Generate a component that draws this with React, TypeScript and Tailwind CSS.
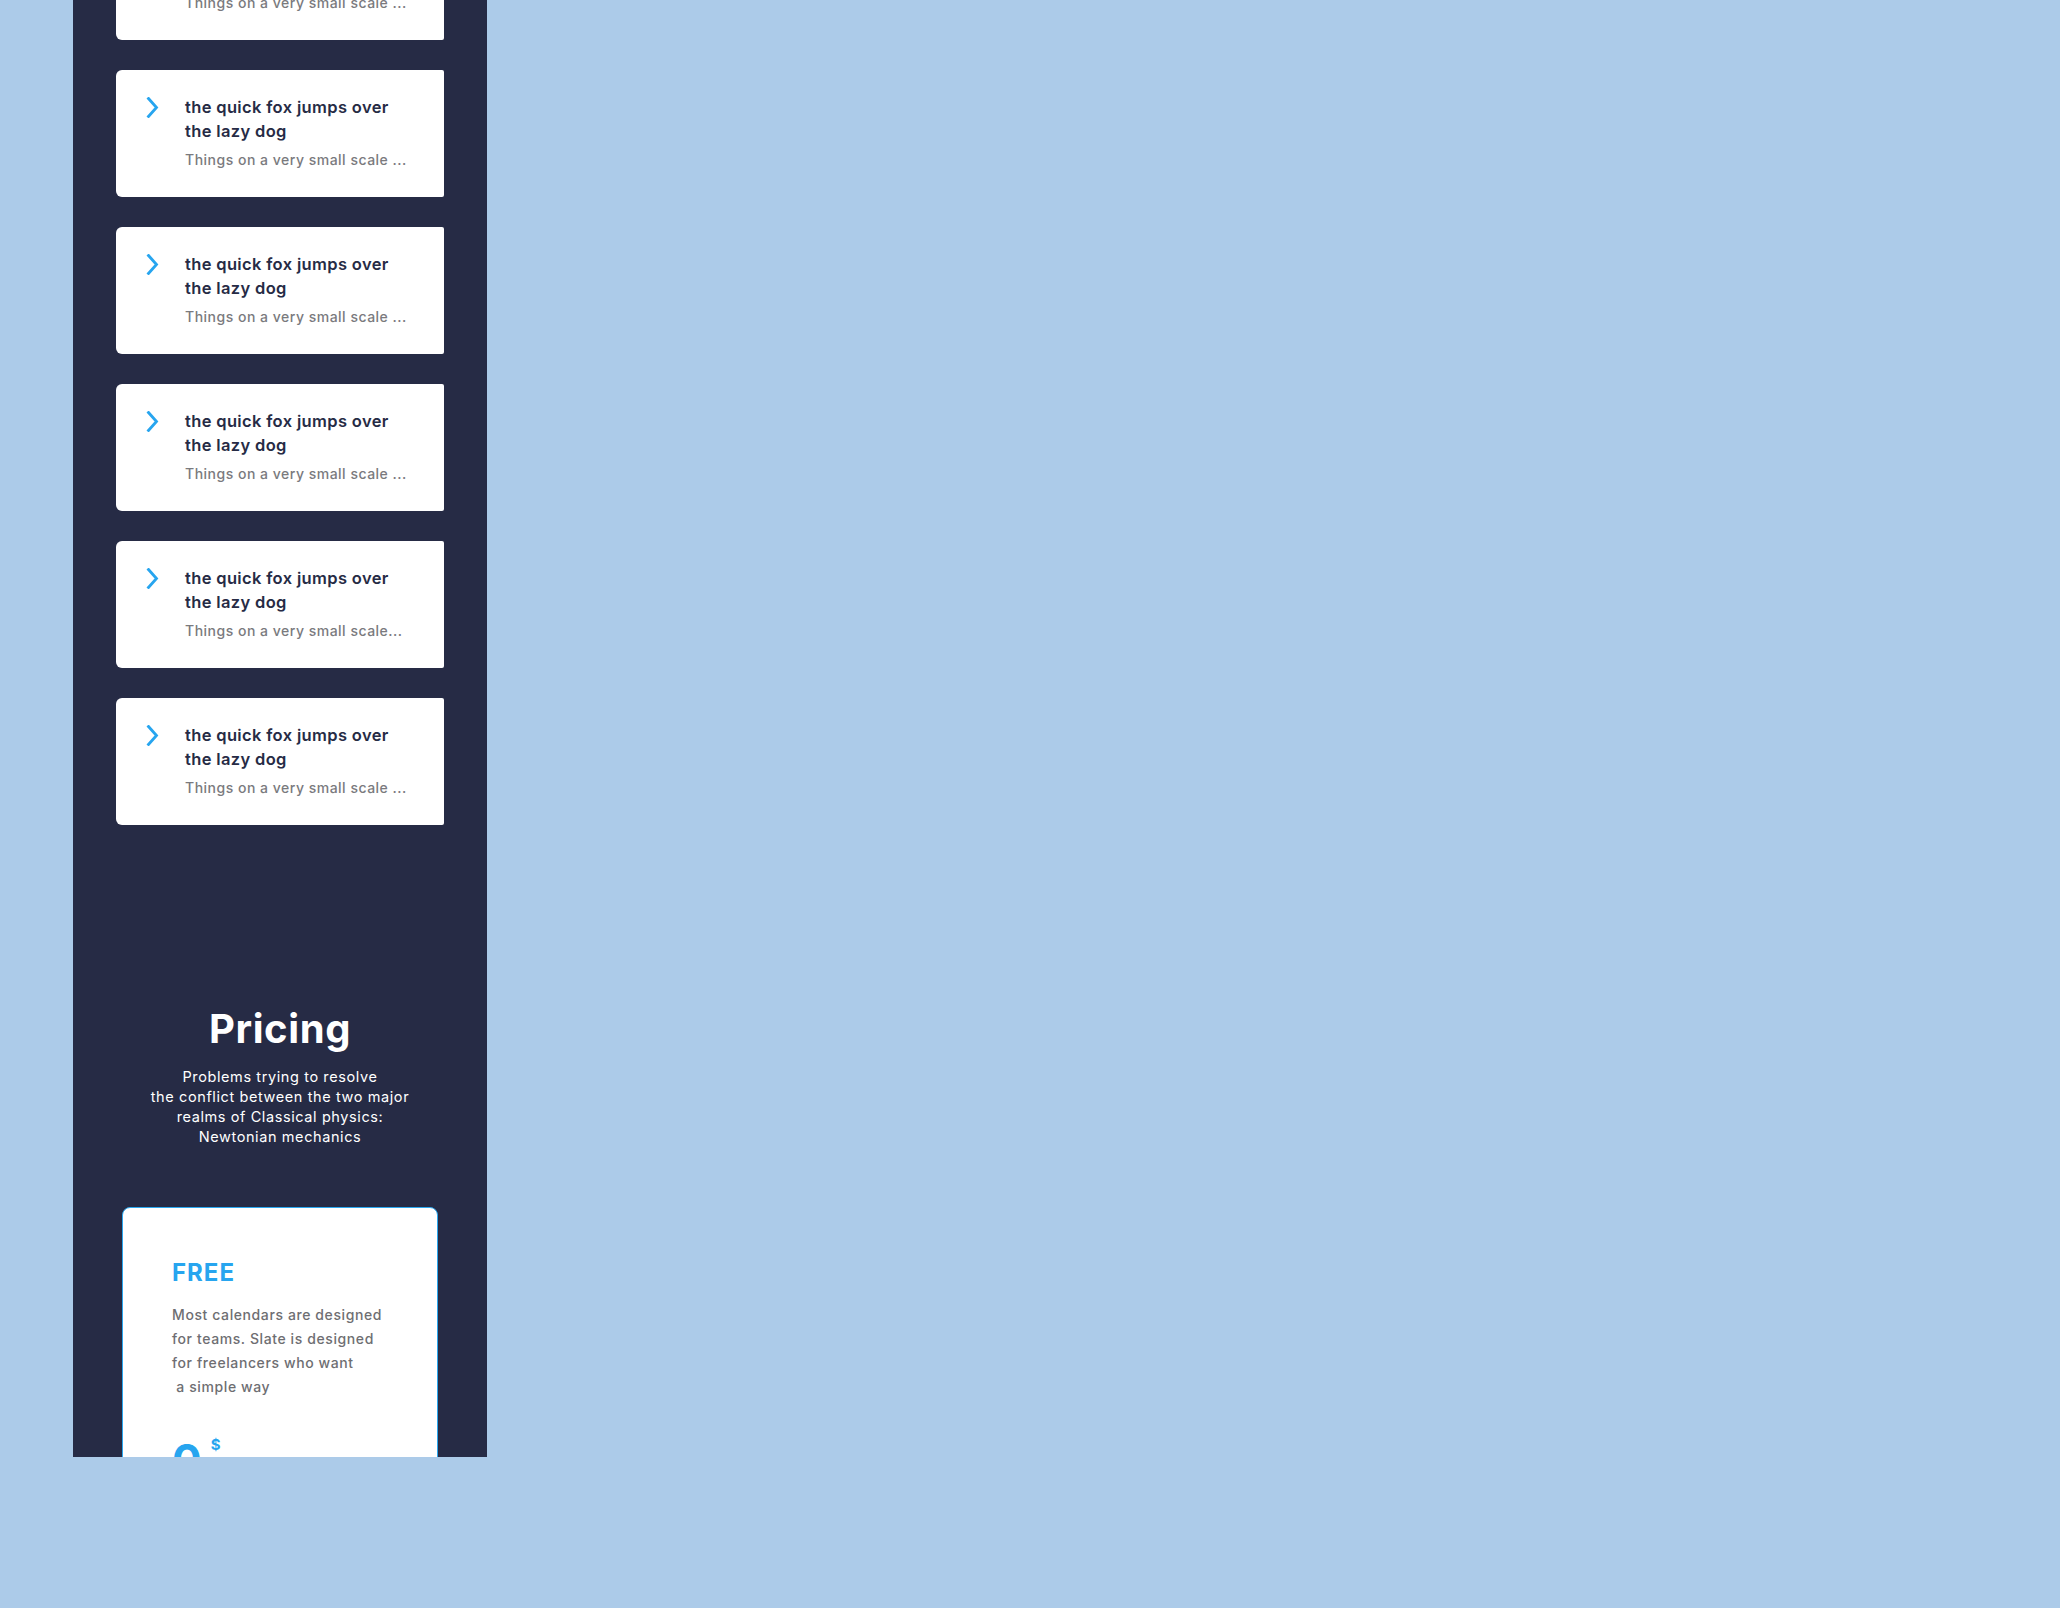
const items = [
  'Things on a very small scale ...',
  'Things on a very small scale ...',
  'Things on a very small scale ...',
  'Things on a very small scale ...',
  'Things on a very small scale...',
  'Things on a very small scale ...',
];

function Chevron() {
  return (
    <svg width="13" height="21" viewBox="0 0 13 21" fill="none" className="shrink-0 mt-[2px]">
      <polyline
        points="2.5,1.5 10.5,10.5 2.5,19.5"
        stroke="#27a5ef"
        strokeWidth="2.8"
        strokeLinecap="square"
        strokeLinejoin="miter"
      />
    </svg>
  );
}

function TopicCard({ text }: { text: string }) {
  return (
    <div className="flex h-[127px] items-start gap-[26px] rounded-l-md rounded-r-[2px] bg-white pl-[30px] pt-[25px]">
      <Chevron />
      <div>
        <h3 className="text-[16.5px] font-semibold leading-6 tracking-[0.35px] text-[#262b45]">
          the quick fox jumps over
          <br />
          the lazy dog
        </h3>
        <p className="mt-[7px] text-[14px] font-medium leading-5 tracking-[0.5px] text-[#7a7a7e]">{text}</p>
      </div>
    </div>
  );
}

export default function App() {
  return (
    <div
      className="min-h-screen w-full bg-[#accbe9]"
      style={{ fontFamily: 'Inter, "Open Sans", sans-serif' }}
    >
      <div className="ml-[73px] h-[1457px] w-[414px] overflow-hidden bg-[#262b45]">
        <div className="-mt-[87px] flex flex-col gap-[30px] px-[43px]">
          {items.map((t, i) => (
            <TopicCard key={i} text={t} />
          ))}
        </div>

        <section className="mt-[180px] flex flex-col items-center">
          <h2 className="text-[40px] font-bold leading-[48px] tracking-[0.6px] text-white">Pricing</h2>
          <p className="mt-[14px] text-center text-[14.5px] leading-5 tracking-[0.6px] text-white">
            Problems trying to resolve
            <br />
            the conflict between the two major
            <br />
            realms of Classical physics:
            <br />
            Newtonian mechanics
          </p>

          <div className="mt-[60px] h-[400px] w-[316px] rounded-lg border border-[#2aa7ef] bg-white pl-[49px] pt-[49px]">
            <h3 className="text-[24px] font-bold leading-8 tracking-[1px] text-[#27a5ef]">FREE</h3>
            <p className="mt-[14px] whitespace-pre-line text-[14px] font-medium leading-6 tracking-[0.6px] text-[#6e6e72]">
              {'Most calendars are designed\nfor teams. Slate is designed\nfor freelancers who want\n\u00a0a simple way'}
            </p>
            <div className="mt-[39px] flex items-start text-[#27a5ef]">
              <span className="text-[44px] font-bold leading-none">0</span>
              <span className="ml-[9px] -mt-[1px] text-[15px] font-bold leading-none">$</span>
            </div>
          </div>
        </section>
      </div>
    </div>
  );
}
